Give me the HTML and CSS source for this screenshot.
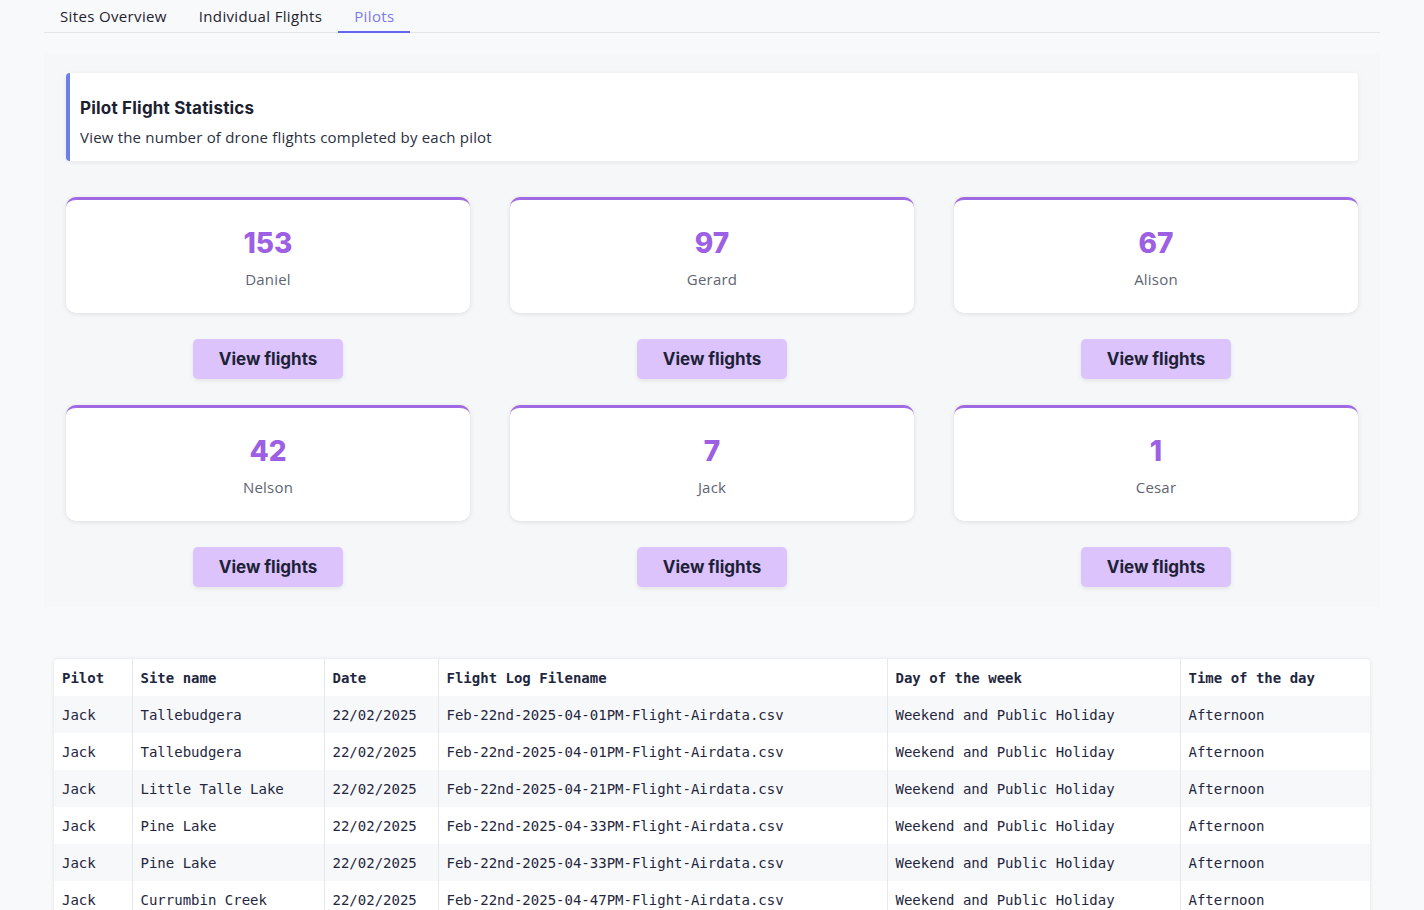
FILE: index.html
```html
<!DOCTYPE html>
<html lang="en">
<head>
<meta charset="utf-8">
<title>Pilots</title>
<link rel="stylesheet" href="styles.css">
</head>
<body>
<div class="page">
  <nav class="tabs">
    <a class="tab">Sites Overview</a>
    <a class="tab">Individual Flights</a>
    <a class="tab active">Pilots</a>
  </nav>
  <section class="panel">
    <div class="intro">
      <h2 class="intro-title">Pilot Flight Statistics</h2>
      <p class="intro-sub">View the number of drone flights completed by each pilot</p>
    </div>
    <div class="grid">
      <div class="pilot">
        <div class="card"><div class="count">153</div><div class="name">Daniel</div></div>
        <button class="btn">View flights</button>
      </div>
      <div class="pilot">
        <div class="card"><div class="count">97</div><div class="name">Gerard</div></div>
        <button class="btn">View flights</button>
      </div>
      <div class="pilot">
        <div class="card"><div class="count">67</div><div class="name">Alison</div></div>
        <button class="btn">View flights</button>
      </div>
      <div class="pilot">
        <div class="card"><div class="count">42</div><div class="name">Nelson</div></div>
        <button class="btn">View flights</button>
      </div>
      <div class="pilot">
        <div class="card"><div class="count">7</div><div class="name">Jack</div></div>
        <button class="btn">View flights</button>
      </div>
      <div class="pilot">
        <div class="card"><div class="count">1</div><div class="name">Cesar</div></div>
        <button class="btn">View flights</button>
      </div>
    </div>
  </section>
  <div class="table-wrap">
    <table class="flights">
      <colgroup>
        <col class="c-pilot"><col class="c-site"><col class="c-date"><col class="c-file"><col class="c-day"><col class="c-time">
      </colgroup>
      <thead>
        <tr><th>Pilot</th><th>Site name</th><th>Date</th><th>Flight Log Filename</th><th>Day of the week</th><th>Time of the day</th></tr>
      </thead>
      <tbody>
        <tr><td>Jack</td><td>Tallebudgera</td><td>22/02/2025</td><td>Feb-22nd-2025-04-01PM-Flight-Airdata.csv</td><td>Weekend and Public Holiday</td><td>Afternoon</td></tr>
        <tr><td>Jack</td><td>Tallebudgera</td><td>22/02/2025</td><td>Feb-22nd-2025-04-01PM-Flight-Airdata.csv</td><td>Weekend and Public Holiday</td><td>Afternoon</td></tr>
        <tr><td>Jack</td><td>Little Talle Lake</td><td>22/02/2025</td><td>Feb-22nd-2025-04-21PM-Flight-Airdata.csv</td><td>Weekend and Public Holiday</td><td>Afternoon</td></tr>
        <tr><td>Jack</td><td>Pine Lake</td><td>22/02/2025</td><td>Feb-22nd-2025-04-33PM-Flight-Airdata.csv</td><td>Weekend and Public Holiday</td><td>Afternoon</td></tr>
        <tr><td>Jack</td><td>Pine Lake</td><td>22/02/2025</td><td>Feb-22nd-2025-04-33PM-Flight-Airdata.csv</td><td>Weekend and Public Holiday</td><td>Afternoon</td></tr>
        <tr><td>Jack</td><td>Currumbin Creek</td><td>22/02/2025</td><td>Feb-22nd-2025-04-47PM-Flight-Airdata.csv</td><td>Weekend and Public Holiday</td><td>Afternoon</td></tr>
      </tbody>
    </table>
  </div>
</div>
</body>
</html>
```
FILE: styles.css
```css
* { box-sizing: border-box; }
html, body { margin: 0; padding: 0; }
body {
  background: #f8f9fb;
  font-family: "Open Sans", "Lato", sans-serif;
  color: #1f2937;
}
.page {
  width: 1336px;
  margin: 0 44px;
}
.tabs {
  display: flex;
  height: 33px;
  border-bottom: 1px solid #e3e5e9;
}
.tab {
  display: flex;
  align-items: center;
  padding: 1px 16px 0;
  font-size: 15px;
  letter-spacing: 0.35px;
  color: #1f2230;
  border-bottom: 2px solid transparent;
  margin-bottom: -1px;
  cursor: pointer;
}
.tab.active {
  color: #7a7af0;
  border-bottom-color: #6366f1;
}
.panel {
  margin-top: 20px;
  background: #f6f7f9;
  padding: 20px 22px 20px;
}
.intro {
  background: #fff;
  border-left: 4px solid #6b7fe9;
  border-radius: 4px;
  box-shadow: 0 1px 4px rgba(0, 0, 0, 0.08);
  padding: 24px 10px 12px;
  height: 88px;
}
.intro-title {
  margin: 0;
  font-family: "Inter", "Open Sans", sans-serif;
  font-size: 17px;
  font-weight: 700;
  color: #1c2130;
  line-height: 22px;
  letter-spacing: 0.2px;
}
.intro-sub {
  margin: 8px 0 0;
  font-size: 15px;
  letter-spacing: 0.2px;
  color: #2a2f40;
  line-height: 20px;
}
.grid {
  margin-top: 36px;
  display: grid;
  grid-template-columns: repeat(3, 1fr);
  column-gap: 40px;
  row-gap: 26px;
}
.pilot {
  display: flex;
  flex-direction: column;
  align-items: center;
  gap: 26px;
}
.card {
  width: 100%;
  height: 116px;
  background: #fff;
  border-top: 3px solid #a06ae3;
  border-radius: 10px;
  box-shadow: 0 1px 5px rgba(0, 0, 0, 0.10);
  display: flex;
  flex-direction: column;
  align-items: center;
  padding-top: 26px;
}
.count {
  font-family: "Inter", "Open Sans", sans-serif;
  font-size: 28px;
  font-weight: 800;
  color: #9d5fe3;
  line-height: 34px;
}
.name {
  margin-top: 9px;
  font-size: 15px;
  letter-spacing: 0.2px;
  color: #5e6472;
  line-height: 20px;
}
.btn {
  width: 150px;
  height: 40px;
  border: none;
  border-radius: 5px;
  background: #dcc3fc;
  box-shadow: 0 2px 4px rgba(0, 0, 0, 0.08);
  font-family: "Inter", "Open Sans", sans-serif;
  font-size: 17px;
  font-weight: 700;
  color: #1d2236;
  cursor: pointer;
}
.table-wrap {
  margin: 52px 10px 0;
  background: #fff;
  border-radius: 4px;
  box-shadow: 0 0 4px rgba(0, 0, 0, 0.10);
  overflow: hidden;
}
.flights {
  width: 100%;
  border-collapse: collapse;
  table-layout: fixed;
  font-family: "DejaVu Sans Mono", "Liberation Mono", monospace;
  font-size: 14px;
  color: #1f2740;
}
.c-pilot { width: 78px; }
.c-site { width: 192px; }
.c-date { width: 114px; }
.c-file { width: 449px; }
.c-day { width: 293px; }
.c-time { width: 190px; }
.flights th, .flights td {
  height: 37px;
  padding: 0 8px;
  text-align: left;
  white-space: nowrap;
  border-left: 1px solid #e5e7eb;
}
.flights th:first-child, .flights td:first-child { border-left: none; }
.flights th { font-weight: 700; background: #fff; }
.flights tbody tr:nth-child(odd) td { background: #f7f8fa; }
```
